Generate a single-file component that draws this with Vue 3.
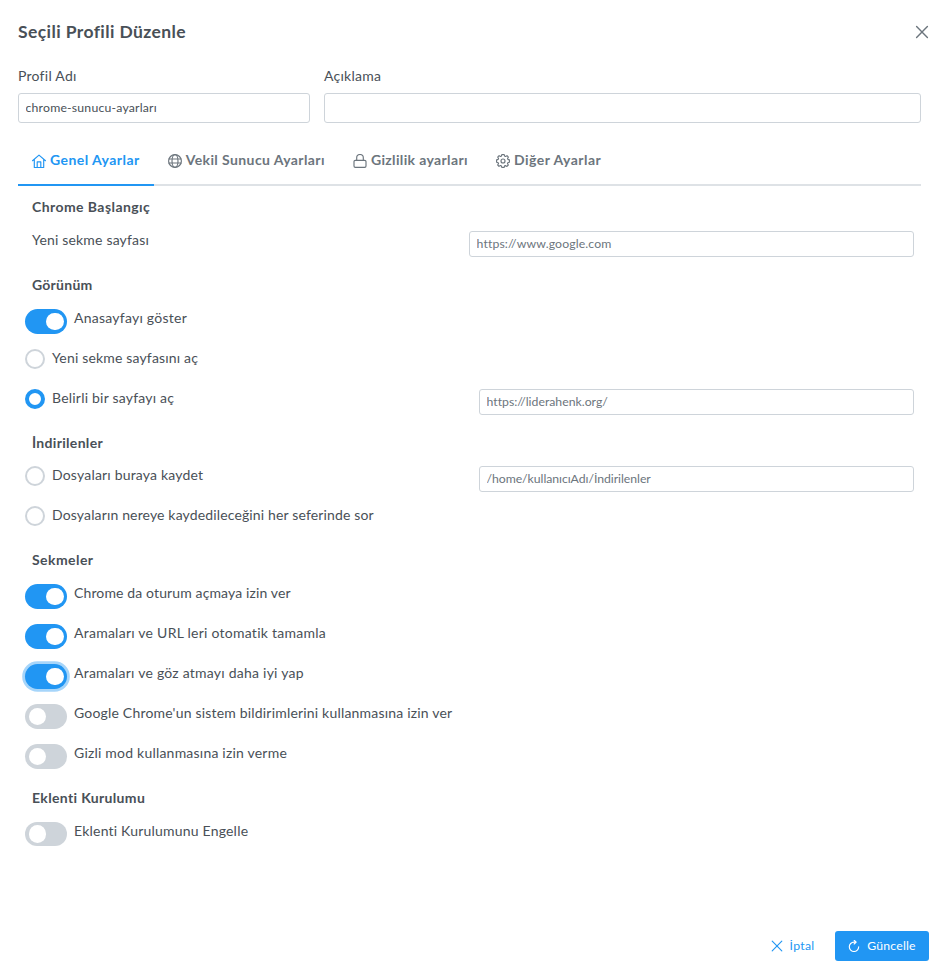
<script setup>
import { ref } from 'vue'

const profileName = ref('chrome-sunucu-ayarları')
const description = ref('')
const activeTab = ref('general')

const tabs = [
  { id: 'general', label: 'Genel Ayarlar', icon: 'home', spacing: 0.45 },
  { id: 'proxy', label: 'Vekil Sunucu Ayarları', icon: 'globe', spacing: 0.4 },
  { id: 'privacy', label: 'Gizlilik ayarları', icon: 'lock', spacing: 0.36 },
  { id: 'other', label: 'Diğer Ayarlar', icon: 'cog', spacing: 0.47 },
]

const sections = ref([
  {
    title: 'Chrome Başlangıç', spacing: 0.43,
    rows: [{ type: 'text', label: 'Yeni sekme sayfası', spacing: 0.18, placeholder: 'https://www.google.com', inputSpacing: 0.13 }],
  },
  {
    title: 'Görünüm', spacing: 0.25,
    rows: [
      { type: 'switch', label: 'Anasayfayı göster', on: true, spacing: 0.25 },
      { type: 'radio', label: 'Yeni sekme sayfasını aç', on: false, spacing: 0.17 },
      { type: 'radio', label: 'Belirli bir sayfayı aç', on: true, spacing: 0.21, placeholder: 'https://liderahenk.org/', inputSpacing: 0.01 },
    ],
  },
  {
    title: 'İndirilenler', spacing: 0.31,
    rows: [
      { type: 'radio', label: 'Dosyaları buraya kaydet', on: false, spacing: 0.19, placeholder: '/home/kullanıcıAdı/İndirilenler', inputSpacing: -0.05 },
      { type: 'radio', label: 'Dosyaların nereye kaydedileceğini her seferinde sor', on: false, spacing: 0.143 },
    ],
  },
  {
    title: 'Sekmeler', spacing: 0.43,
    rows: [
      { type: 'switch', label: 'Chrome da oturum açmaya izin ver', on: true, spacing: 0.126 },
      { type: 'switch', label: 'Aramaları ve URL leri otomatik tamamla', on: true, spacing: 0.25 },
      { type: 'switch', label: 'Aramaları ve göz atmayı daha iyi yap', on: true, focused: true, spacing: 0.235 },
      { type: 'switch', label: "Google Chrome'un sistem bildirimlerini kullanmasına izin ver", on: false, spacing: 0.19 },
      { type: 'switch', label: 'Gizli mod kullanmasına izin verme', on: false, spacing: 0.21 },
    ],
  },
  {
    title: 'Eklenti Kurulumu', spacing: 0.34,
    rows: [{ type: 'switch', label: 'Eklenti Kurulumunu Engelle', on: false, spacing: 0.2 }],
  },
])

const px = (n) => ({ letterSpacing: n + 'px' })
</script>

<template>
  <div class="dialog">
    <header class="head">
      <h1 class="title">Seçili Profili Düzenle</h1>
      <button class="close" aria-label="Kapat">
        <svg width="14" height="14" viewBox="0 0 14 14"><path d="M1.6 1.6 12.4 12.4M12.4 1.6 1.6 12.4" /></svg>
      </button>
    </header>

    <div class="fields">
      <div class="field name">
        <label for="pname">Profil Adı</label>
        <input id="pname" v-model="profileName" class="input" />
      </div>
      <div class="field desc">
        <label for="pdesc">Açıklama</label>
        <input id="pdesc" v-model="description" class="input" />
      </div>
    </div>

    <nav class="tabs">
      <button
        v-for="t in tabs"
        :key="t.id"
        class="tab"
        :class="{ active: activeTab === t.id }"
        @click="activeTab = t.id"
      >
        <svg class="tab-icon" width="14" height="14" viewBox="0 0 14 14">
          <template v-if="t.icon === 'home'">
            <path d="M.5 6.7 7 1.1l6.500 5.600M2.300 5.400v8.100h9.400V5.400M5.200 13.400V7.900h3.600v5.500" />
          </template>
          <template v-else-if="t.icon === 'globe'">
            <circle cx="7" cy="7" r="6.400" />
            <ellipse cx="7" cy="7" rx="3" ry="6.400" />
            <path d="M.9 5h12.200M.9 9h12.200" />
          </template>
          <template v-else-if="t.icon === 'lock'">
            <rect x="1" y="6.300" width="12" height="7.100" rx="1.300" />
            <path d="M3.700 6.300V3.800a3.300 3.300 0 0 1 6.600 0v2.500" />
          </template>
          <template v-else>
            <path d="M5.800.6h2.400l.5 1.600.8.3 1.500-.8 1.400 1.400-.8 1.500.3.800 1.500.5v2.300l-1.600.5-.3.800.8 1.500-1.400 1.400-1.500-.8-.8.300-.4 1.500H5.800l-.5-1.600-.8-.3-1.500.8L1.700 11l.8-1.500-.3-.8-1.600-.5V5.900l1.600-.5.3-.8-.8-1.500 1.400-1.400 1.500.8.700-.3z" />
            <circle cx="7" cy="7" r="2" />
          </template>
        </svg>
        <span :style="px(t.spacing)">{{ t.label }}</span>
      </button>
    </nav>

    <main class="panel">
      <section v-for="s in sections" :key="s.title" class="section">
        <h2 class="section-title" :style="px(s.spacing)">{{ s.title }}</h2>
        <div v-for="r in s.rows" :key="r.label" class="row" :class="r.type">
          <button v-if="r.type === 'switch'" class="toggle" :class="{ on: r.on, focused: r.focused }" @click="r.on = !r.on">
            <span class="knob"></span>
          </button>
          <span v-else-if="r.type === 'radio'" class="dot" :class="{ on: r.on }"></span>
          <span class="label" :style="px(r.spacing)">{{ r.label }}</span>
          <input v-if="r.placeholder" class="input small" :placeholder="r.placeholder" :style="px(r.inputSpacing)" />
        </div>
      </section>
    </main>

    <footer class="foot">
      <button class="btn text">
        <svg width="12" height="12" viewBox="0 0 12 12"><path d="M1.200 1.200 10.800 10.800M10.800 1.200 1.200 10.800" /></svg>
        <span class="cancel">İptal</span>
      </button>
      <button class="btn primary">
        <svg width="12" height="12" viewBox="0 0 12 12"><path d="M6 2.100A4.700 4.700 0 1 0 10.700 6.800M6 2.100h2.200M6.200.3 8.200 2.100 6.200 4" /></svg>
        <span class="update">Güncelle</span>
      </button>
    </footer>
  </div>
</template>

<style>
body {
  background: #fff;
}
</style>

<style scoped>
.dialog,
.dialog * {
  box-sizing: border-box;
}
.dialog {
  display: flex;
  flex-direction: column;
  height: 977px;
  padding: 18px 13px 16px 18px;
  font: 14px/21px Lato, 'Noto Sans', sans-serif;
  color: #495057;
}
button {
  font: inherit;
  color: inherit;
  background: none;
  border: 0;
  padding: 0;
}
svg {
  display: block;
  fill: none;
  stroke: currentColor;
  stroke-width: 1.15;
  stroke-linecap: round;
  stroke-linejoin: round;
}
.head {
  display: flex;
  justify-content: space-between;
  align-items: center;
  height: 28px;
}
.title {
  margin: 0;
  padding-bottom: 2px;
  font-size: 17.5px;
  font-weight: 700;
  letter-spacing: 0.4px;
}
.close {
  color: #6c757d;
}
.close svg {
  stroke-width: 1.4;
}
.fields {
  display: flex;
  gap: 14px;
  padding: 19px 8px 0 0;
}
.field {
  display: flex;
  flex-direction: column;
  gap: 7px;
  letter-spacing: 0.25px;
}
.name {
  width: 292px;
}
.desc {
  flex: 1;
}
.input {
  height: 30px;
  width: 100%;
  border: 1px solid #ced4da;
  border-radius: 3px;
  padding: 0 6.5px 2px;
  font: 12.25px Lato, 'Noto Sans', sans-serif;
  letter-spacing: 0.2px;
  color: #495057;
  background: #fff;
  outline: none;
}
.input::placeholder {
  color: #6c757d;
  opacity: 1;
}
.tabs {
  display: flex;
  height: 51px;
  margin: 12px 8px 0 0;
  border-bottom: 2px solid #dee2e6;
}
.tab {
  display: flex;
  align-items: center;
  gap: 4px;
  height: 51px;
  padding: 0 14px 0;
  border-bottom: 2px solid transparent;
  font-weight: 700;
  color: #6c757d;
}
.tab-icon {
  margin-top: 2px;
}
.tab.active {
  color: #2196f3;
  border-color: #2196f3;
}
.panel {
  padding: 0 15px 0 7px;
  flex: 1;
}
.section-title {
  margin: 0;
  padding: 13px 7px 0;
  height: 37.5px;
  font-size: 14px;
  font-weight: 700;
  line-height: 21px;
}
.section:first-child .section-title {
  height: 35px;
  padding-top: 10px;
}
.row {
  display: flex;
  align-items: flex-start;
  gap: 7px;
  height: 40px;
  padding-top: 10.25px;
}
.row.switch {
  padding-top: 10.75px;
}
.label {
  margin-top: -2px;
  white-space: nowrap;
}
.row.switch .label {
  margin-top: -2.25px;
}
.row.text .label {
  padding-left: 7px;
}
.small {
  width: 435px;
  height: 26px;
  margin-left: auto;
}
.dot.on ~ .small {
  margin-top: 0.25px;
}
.row.text .small {
  width: 445px;
}
.toggle {
  display: flex;
  flex: none;
  align-items: center;
  width: 42px;
  height: 24.5px;
  padding: 0 3.5px;
  border-radius: 30px;
  background: #ced4da;
}
.toggle.on {
  justify-content: flex-end;
  background: #2196f3;
}
.toggle.focused {
  box-shadow: 0 0 0 2.8px #a6d5fa;
}
.knob {
  width: 17.5px;
  height: 17.5px;
  border-radius: 50%;
  background: #fff;
}
.dot {
  flex: none;
  width: 20px;
  height: 20px;
  border: 2px solid #ced4da;
  border-radius: 50%;
  background: #fff;
}
.dot.on {
  border: 4px solid #2196f3;
}
.foot {
  display: flex;
  justify-content: flex-end;
  gap: 7px;
}
.btn {
  display: flex;
  align-items: center;
  justify-content: center;
  gap: 7px;
  height: 30px;
  border-radius: 3px;
  font-size: 12.25px;
}
.btn span {
  padding-bottom: 2px;
}
.btn.text {
  width: 71px;
  color: #2196f3;
}
.btn.primary {
  width: 94px;
  background: #2196f3;
  color: #fff;
}
.cancel {
  letter-spacing: 0.3px;
}
.update {
  letter-spacing: 0.2px;
}
</style>
